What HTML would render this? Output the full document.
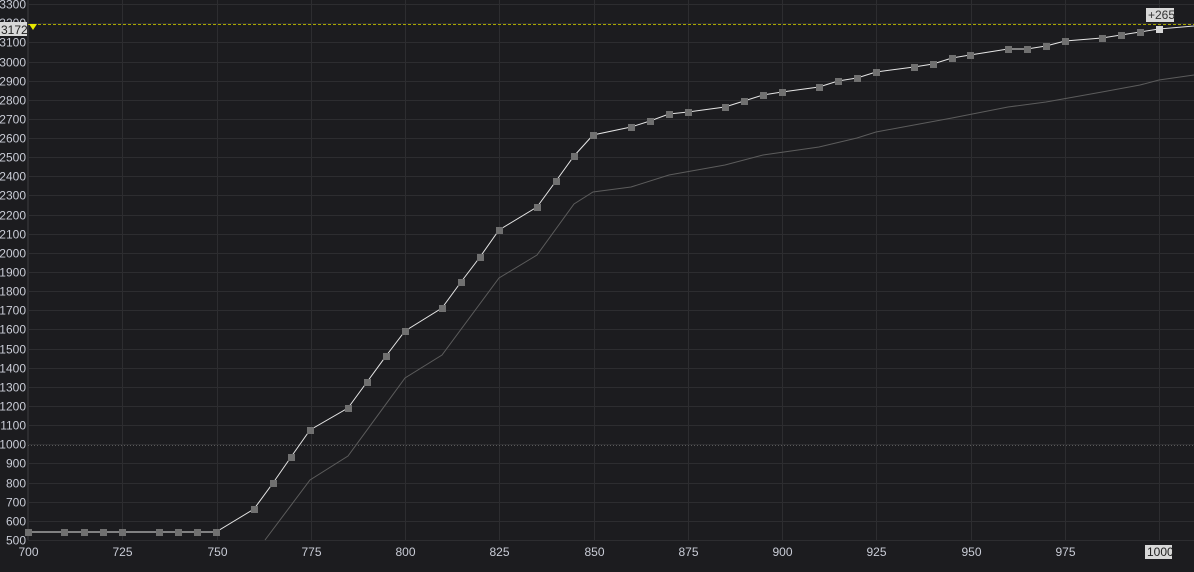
<!DOCTYPE html>
<html><head><style>
html,body{margin:0;padding:0;background:#1c1c1f;width:1194px;height:572px;overflow:hidden}
svg{display:block}
text{font-family:"Liberation Sans",sans-serif;font-size:12px;fill:#c9ccd6}
</style></head><body>
<svg width="1194" height="572" xmlns="http://www.w3.org/2000/svg">
<rect width="1194" height="572" fill="#1c1c1f"/>
<g stroke="#2d2d30" stroke-width="1" id="grid"></g>
<g id="lbl"></g>
<line x1="28" y1="445.5" x2="1194" y2="445.5" stroke="#5a5a5a" stroke-dasharray="1,2"/>
<line x1="28" y1="24.5" x2="1194" y2="24.5" stroke="#a8a800" stroke-dasharray="3,2"/>
<polyline fill="none" stroke="#5c5c5c" stroke-width="1" points="265,540 310,480 348,456 405,378 442,355 499,278 537,255 574,204 593,192 631,187 669,175 725,165 763,155 819,147 857,138 876,132 914,125 952,118 1008,107 1046,102 1102,92 1140,85 1159,80 1194,75"/>
<polyline id="up" fill="none" stroke="#e6e6e6" stroke-width="1" points="28,532 64,532 84,532 103,532 122,532 159,532 178,532 197,532 216,532 254,509 273,483 291,457 310,430 348,408 367,382 386,356 405,331 442,308 461,282 480,257 499,230 537,207 556,181 574,156 593,135 631,127 650,121 669,114 688,112 725,107 744,101 763,95 782,92 819,87 838,81 857,78 876,72 914,67 933,64 952,58 970,55 1008,49 1027,49 1046,46 1065,41 1102,38 1121,35 1140,32 1159,29 1194,26"/>
<g id="mk" fill="#707070"></g>
<polygon points="29,24 37,24 33,30" fill="#e8e800"/>
<rect x="0" y="22" width="27" height="14" fill="#d8d8d8"/>
<text x="1" y="34" style="fill:#222">3172</text>
<rect x="1146" y="8" width="28" height="14" fill="#d8d8d8"/>
<text x="1148" y="19" style="fill:#333">+265</text>
<rect x="1145" y="545" width="27" height="14" fill="#d8d8d8"/>
<text x="1147" y="556" style="fill:#222">1000</text>
</svg>
<script>
var ns="http://www.w3.org/2000/svg",g=document.getElementById('grid'),l=document.getElementById('lbl');
function mk(t,a,p){var e=document.createElementNS(ns,t);for(var k in a)e.setAttribute(k,a[k]);(p).appendChild(e);return e;}
for(var v=500;v<=3300;v+=100){var y=Math.round(540-(v-500)*0.1914)+0.5;mk('line',{x1:28,y1:y,x2:1194,y2:y},g);
 if(v!=3200){var t=mk('text',{x:26,y:y+4,'text-anchor':'end'},l);t.textContent=v;}}
for(var v=700;v<=1000;v+=25){var x=Math.round(28+(v-700)*3.77)+0.5;mk('line',{x1:x,y1:0,x2:x,y2:540},g);
 if(v!=1000){var t=mk('text',{x:x,y:556,'text-anchor':'middle'},l);t.textContent=v;}}
mk('line',{x1:27.5,y1:0,x2:27.5,y2:540},g);
var t=mk('text',{x:26,y:27,'text-anchor':'end'},l);t.textContent=3200;
var pts=document.getElementById('up').getAttribute('points').split(' '),m=document.getElementById('mk');
pts.forEach(function(p,i){if(i==pts.length-1)return;var a=p.split(',');var r=mk('rect',{x:a[0]-3,y:a[1]-3,width:7,height:7},m);if(a[0]=='1159')r.setAttribute('fill','#d8d8d8');});
</script>
</body></html>
